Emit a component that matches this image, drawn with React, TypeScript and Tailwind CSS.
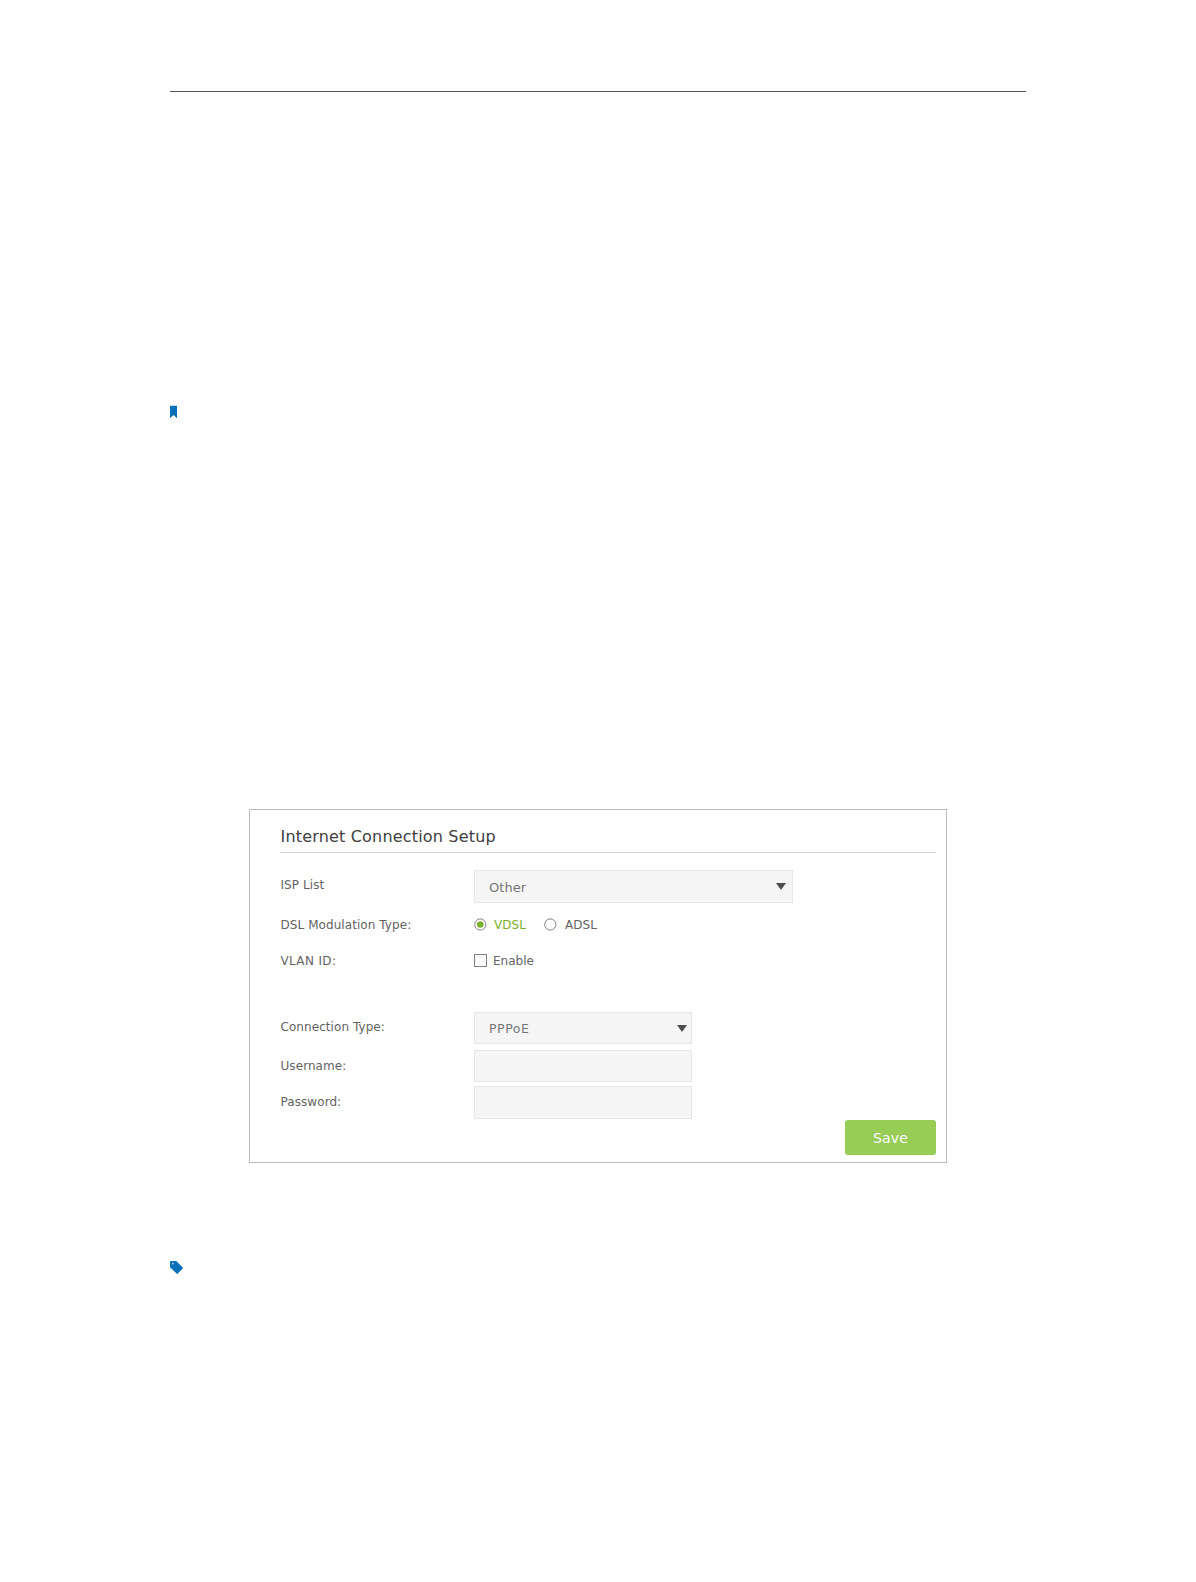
import { useState } from "react";
import type { ReactNode } from "react";

function Arrow() {
  return (
    <svg width="10" height="7" viewBox="0 0 10 7" fill="#4d4d4d">
      <path d="M0 0h10L5 7z" />
    </svg>
  );
}

function Row({ label, className, children }: { label: string; className: string; children?: ReactNode }) {
  return (
    <div className={`flex text-[12px] tracking-[0.07px] ${className}`}>
      <span className="w-[194px] shrink-0 pl-[0.5px] text-[#636363]">{label}</span>
      {children}
    </div>
  );
}

function Radio({ checked, onSelect }: { checked: boolean; onSelect: () => void }) {
  return (
    <button type="button" role="radio" aria-checked={checked} onClick={onSelect} className="block">
      <svg width="13" height="13" viewBox="0 0 13 13">
        <circle cx="6.3" cy="6.5" r="5.6" fill="#fff" stroke="#808080" />
        {checked ? <circle cx="6.3" cy="6.5" r="3.3" fill="#7cb02b" /> : null}
      </svg>
    </button>
  );
}

export default function App() {
  const [type, setType] = useState("VDSL");
  const [vlan, setVlan] = useState(false);

  return (
    <main className="flex h-[1582px] w-[1196px] flex-col bg-white pl-[170px] pt-[91px] font-['DejaVu_Sans',Verdana,sans-serif]">
      <div className="h-px w-[856px] shrink-0 bg-[#555555]" />

      <svg className="mt-[313px] shrink-0" width="8" height="14" viewBox="0 0 8 14" fill="#0870b8">
        <path d="M0 .7h7v12.5L3.5 10 0 13.2z" />
      </svg>

      <section className="ml-[79px] mt-[390px] h-[354px] w-[698px] shrink-0 border border-[#bababa] pl-[30px] pr-[10px]">
        <h1 className="mt-[11px] h-[32px] border-b border-[#d2d2d2] pl-[0.5px] text-[16px] leading-[31px] tracking-[0.18px] text-[#404040]">
          Internet Connection Setup
        </h1>

        <Row label="ISP List" className="mt-[17px] h-[33px] leading-[31px]">
          <div className="flex h-[33px] w-[319px] items-center justify-between border border-[#e6e6e6] bg-[#f5f5f5] pl-[14px] pr-[6px]">
            <span className="pt-px text-[13px] text-[#757575]">Other</span>
            <Arrow />
          </div>
        </Row>

        <Row label="DSL Modulation Type:" className="mt-[6px] h-[31px] leading-[32px]">
          <div className="flex h-[31px] items-center text-[#636363]">
            <Radio checked={type === "VDSL"} onSelect={() => setType("VDSL")} />
            <span className="ml-[7px] w-[50px] text-[#7cb02b]">VDSL</span>
            <Radio checked={type === "ADSL"} onSelect={() => setType("ADSL")} />
            <span className="ml-[8px]">ADSL</span>
          </div>
        </Row>

        <Row label="VLAN ID:" className="mt-[5px] h-[31px] leading-[32px] tracking-[0.35px]">
          <button
            type="button"
            role="checkbox"
            aria-checked={vlan}
            onClick={() => setVlan(!vlan)}
            className="flex h-[31px] items-center tracking-normal text-[#636363]"
          >
            <span className="mr-[6px] h-[13px] w-[13px] border border-[#808080] bg-[#fafafa]" />
            Enable
          </button>
        </Row>

        <Row label="Connection Type:" className="mt-[36px] h-[32px] leading-[31px]">
          <div className="flex h-[32px] w-[218px] items-center justify-between border border-[#e6e6e6] bg-[#f5f5f5] pl-[14px] pr-[4px]">
            <span className="pt-px text-[12.5px] tracking-[0.55px] text-[#757575]">PPPoE</span>
            <Arrow />
          </div>
        </Row>
        <Row label="Username:" className="mt-[6px] h-[32px] leading-[32px]">
          <input aria-label="Username" className="h-[32px] w-[218px] border border-[#e6e6e6] bg-[#f5f5f5] px-3 outline-none" />
        </Row>
        <Row label="Password:" className="mt-[4px] h-[33px] leading-[32px]">
          <input type="password" aria-label="Password" className="h-[33px] w-[218px] border border-[#e6e6e6] bg-[#f5f5f5] px-3 outline-none" />
        </Row>

        <div className="flex justify-end">
          <button type="button" className="mt-px h-[35px] w-[91px] rounded-[3px] bg-[#97cc57] pt-px text-[14px] tracking-[0.1px] text-white">
            Save
          </button>
        </div>
      </section>

      <svg className="mt-[98px] shrink-0" width="14" height="14" viewBox="0 0 14 14" fill="#0870b8">
        <path
          fillRule="evenodd"
          d="M1.2 0H6.3L12.7 6.4q.6.6 0 1.2L7.8 12.6q-.6.6-1.2 0L0 6.2V1.2Q0 0 1.2 0zM2.8 1.9a.8.8 0 1 0 0 1.6.8.8 0 0 0 0-1.6z"
        />
      </svg>
    </main>
  );
}
